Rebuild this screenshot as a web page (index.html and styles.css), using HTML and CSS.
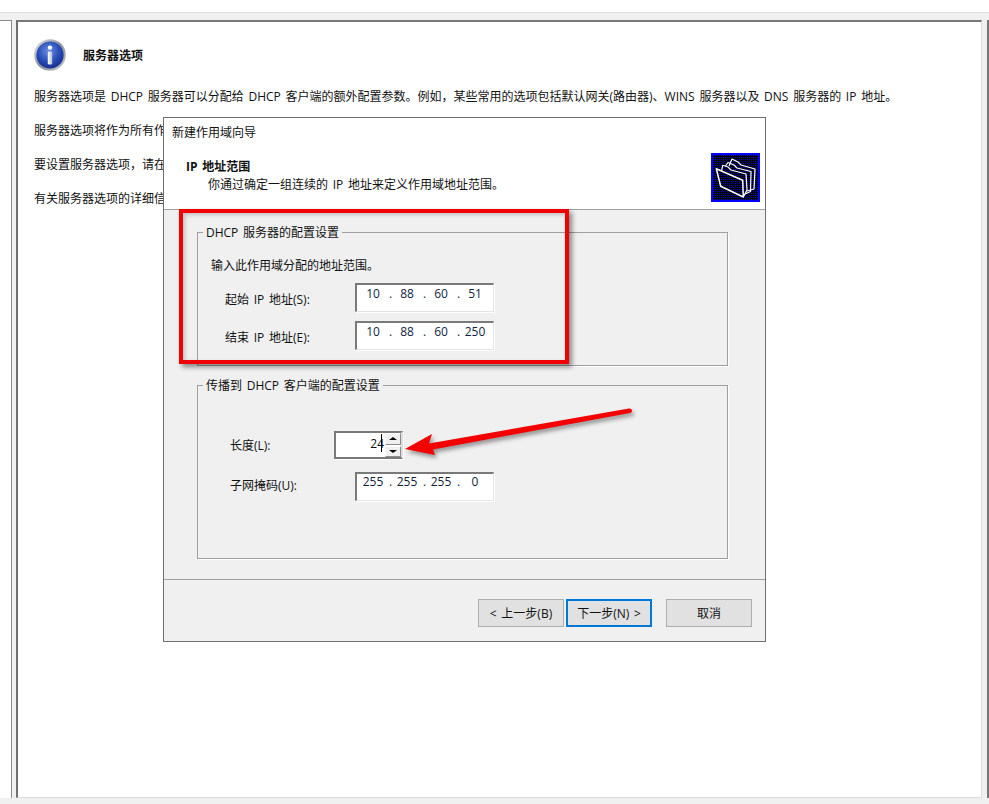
FILE: index.html
```html
<!DOCTYPE html>
<html lang="zh-CN">
<head>
<meta charset="utf-8">
<title>新建作用域向导</title>
<link rel="stylesheet" href="styles.css">
</head>
<body>
<div class="page">
  <div class="top-white"></div>
  <div class="top-band"></div>
  <div class="workspace">
    <div class="pane-left"></div>
    <main class="pane-main">
      <header class="page-head">
        <svg class="info-icon" viewBox="0 0 32 32" aria-hidden="true">
          <defs>
            <radialGradient id="orb" cx="45%" cy="35%" r="70%">
              <stop offset="0" stop-color="#6c8fe6"/>
              <stop offset=".55" stop-color="#2a4fb8"/>
              <stop offset="1" stop-color="#12288a"/>
            </radialGradient>
            <linearGradient id="ring" x1="0" y1="0" x2="1" y2="1">
              <stop offset="0" stop-color="#e4e6ea"/>
              <stop offset=".5" stop-color="#8a8f98"/>
              <stop offset="1" stop-color="#c9ccd2"/>
            </linearGradient>
            <linearGradient id="stem" x1="0" y1="0" x2="1" y2="0">
              <stop offset="0" stop-color="#ffffff"/>
              <stop offset="1" stop-color="#b9bfca"/>
            </linearGradient>
          </defs>
          <circle cx="16" cy="16" r="15.8" fill="url(#ring)"/>
          <circle cx="16" cy="16" r="13.6" fill="url(#orb)"/>
          <circle cx="16" cy="8.6" r="2.2" fill="#fff"/>
          <rect x="13.8" y="12.6" width="4.4" height="13" rx="1.4" fill="url(#stem)"/>
        </svg>
        <h1 class="page-title">服务器选项</h1>
      </header>
      <p class="para para-first">服务器选项是 DHCP 服务器可以分配给 DHCP 客户端的额外配置参数。例如，某些常用的选项包括默认网关(路由器)、WINS 服务器以及 DNS 服务器的 IP 地址。</p>
      <p class="para">服务器选项将作为所有作</p>
      <p class="para">要设置服务器选项，请在</p>
      <p class="para">有关服务器选项的详细信</p>
    </main>
    <div class="pane-right"></div>
  </div>
  <div class="bottom-band"></div>

  <section class="dialog">
    <div class="dialog-top">
      <div class="dialog-title">新建作用域向导</div>
      <div class="wizard-head">
        <div class="wizard-text">
          <div class="wizard-heading">IP 地址范围</div>
          <div class="wizard-sub">你通过确定一组连续的 IP 地址来定义作用域地址范围。</div>
        </div>
        <svg class="folder-icon" viewBox="0 0 49 49" aria-hidden="true">
          <defs>
            <pattern id="dither" width="2" height="2" patternUnits="userSpaceOnUse">
              <rect width="2" height="2" fill="#000"/>
              <rect width="1" height="1" fill="#0000c8"/>
            </pattern>
          </defs>
          <rect width="49" height="49" fill="#0000ff"/>
          <rect x="2" y="2" width="45" height="45" fill="url(#dither)"/>
          <g fill="none" stroke="#fff" stroke-width="1.2" stroke-linejoin="round">
            <path d="M18 13 L21 6 L27 9 L30 12 L44 16 L43 36 L36 38"/>
            <path d="M14.500 13 L17 9.500 L23 12 L26 15 L40 18.500 L39.500 38.500 L34 41"/>
            <path d="M10.700 17.300 L11.700 12.300 L17 14 L20 17 L35 21 L36 37 L32.300 44"/>
            <path d="M5.300 15.700 L31.700 27.300 L32.300 44 L9.700 33.300 Z" stroke-width="1.500"/>
          </g>
        </svg>
      </div>
    </div>
    <div class="dialog-body">
      <fieldset class="group group-range">
        <legend class="group-legend">DHCP 服务器的配置设置</legend>
        <p class="group-hint">输入此作用域分配的地址范围。</p>
        <div class="field-row field-row-start">
          <label class="field-label">起始 IP 地址(S):</label>
          <div class="ip-box">
            <span>10</span><i>.</i><span>88</span><i>.</i><span>60</span><i>.</i><span>51</span>
          </div>
        </div>
        <div class="field-row field-row-end">
          <label class="field-label">结束 IP 地址(E):</label>
          <div class="ip-box">
            <span>10</span><i>.</i><span>88</span><i>.</i><span>60</span><i>.</i><span>250</span>
          </div>
        </div>
      </fieldset>
      <fieldset class="group group-mask">
        <legend class="group-legend">传播到 DHCP 客户端的配置设置</legend>
        <div class="field-row field-row-length">
          <label class="field-label field-label-short">长度(L):</label>
          <div class="spin-box">
            <div class="spin-value"><span class="spin-number">24</span><span class="caret"></span></div>
            <div class="spin-buttons">
              <div class="spin-btn"><span class="tri-up"></span></div>
              <div class="spin-btn"><span class="tri-down"></span></div>
            </div>
          </div>
        </div>
        <div class="field-row field-row-mask">
          <label class="field-label field-label-mask">子网掩码(U):</label>
          <div class="ip-box ip-box-mask">
            <span>255</span><i>.</i><span>255</span><i>.</i><span>255</span><i>.</i><span>0</span>
          </div>
        </div>
      </fieldset>
    </div>
    <footer class="dialog-foot">
      <button class="btn" type="button">&lt; 上一步(B)</button>
      <button class="btn btn-default" type="button">下一步(N) &gt;</button>
      <button class="btn btn-cancel" type="button">取消</button>
    </footer>
  </section>

  <div class="callout-box"></div>
  <svg class="callout-arrow" viewBox="0 0 250 60" aria-hidden="true">
    <path d="M5 41 L32 26 L29 35.500 L229 .5 C232.500 0 233 4.500 230 5 L33 41.500 L35 47 Z" fill="#f40000"/>
  </svg>
</div>
</body>
</html>
```
FILE: styles.css
```css
* { box-sizing: border-box; }
html, body { margin: 0; padding: 0; }
body {
  background: #fff;
  color: #111;
  font: 12px/16px "Open Sans", "Noto Sans CJK SC", "Noto Sans", sans-serif;
  word-spacing: 1.6px;
}
.page {
  position: relative;
  width: 989px;
  height: 804px;
  overflow: hidden;
  display: flex;
  flex-direction: column;
}
.top-white { height: 13px; background: #fff; border-bottom: 1px solid #e2e2e2; }
.top-band { height: 7px; background: #f0f0f0; }
.workspace {
  flex: 1;
  display: flex;
  background: #f0f0f0;
}
.pane-left {
  width: 12px;
  background: #fff;
  border-top: 1px solid #8a8a8a;
  border-right: 1px solid #8a8a8a;
}
.pane-main {
  margin-left: 4px;
  width: 966px;
  background: #fff;
  border-top: 2px solid #777;
  border-left: 2px solid #6e6e6e;
  border-right: 1px solid #dcdcdc;
  border-bottom: 1px solid #dcdcdc;
  padding: 17px 0 0 16px;
}
.pane-right {
  margin-left: 5px;
  flex: 1;
  background: #fff;
  border-top: 2px solid #777;
  border-left: 2px solid #777;
}
.bottom-band { height: 6px; background: #f0f0f0; }

.page-head { display: flex; align-items: center; height: 32px; }
.info-icon { width: 32px; height: 32px; flex: none; }
.page-title { margin: 1px 0 0 17px; font-size: 12px; line-height: 16px; font-weight: 700; color: #111; }
.para { margin: 18px 0 0; height: 16px; white-space: nowrap; }
.para-first { margin-top: 18px; }

.dialog {
  position: absolute;
  left: 163px;
  top: 117px;
  width: 603px;
  height: 525px;
  background: #f0f0f0;
  border: 1px solid #6f6f6f;
  display: flex;
  flex-direction: column;
}
.dialog-top {
  height: 92px;
  background: #fff;
  border-bottom: 1px solid #a0a0a0;
  flex: none;
}
.dialog-title { height: 16px; margin: 7px 0 0 8px; }
.wizard-head {
  display: flex;
  justify-content: space-between;
  margin-top: 11px;
  padding: 0 5px 0 22px;
}
.wizard-text { padding-top: 7px; }
.wizard-heading { font-weight: 700; height: 16px; }
.wizard-sub { margin: 2px 0 0 22px; height: 16px; }
.folder-icon { width: 49px; height: 49px; flex: none; margin-top: 1px; display: block; }

.dialog-body { flex: 1; padding: 0 0 0 33px; }
.group {
  margin: 0;
  padding: 0;
  min-width: 0;
  width: 531px;
  border: 1px solid #a0a0a0;
  box-shadow: 1px 1px 0 #fff;
}
.group-legend { margin-left: 5px; padding: 0 3px; height: 16px; line-height: 18px; }
.group-range { height: 142px; margin-top: 14px; }
.group-mask { height: 182px; margin-top: 11px; }
.group-hint { margin: 18px 0 0 13px; height: 16px; }

.field-row { display: flex; align-items: flex-start; margin-left: 27px; }
.field-row-start { margin-top: 9px; }
.field-row-end { margin-top: 9px; }
.field-row-length { margin-top: 38px; margin-left: 32px; }
.field-row-mask { margin-top: 12px; margin-left: 32px; }
.field-label { width: 130px; flex: none; padding-top: 9px; height: 29px; }
.field-label-short { width: 104px; padding-top: 7px; }
.field-label-mask { width: 125px; padding-top: 6px; }

.ip-box {
  width: 139px;
  height: 29px;
  background: #fff;
  border-top: 2px solid #7a7a7a;
  border-left: 2px solid #7a7a7a;
  border-right: 1px solid #e4e4e4;
  border-bottom: 1px solid #e4e4e4;
  box-shadow: 1px 1px 0 #fff;
  padding: 0;
  display: flex;
  align-items: flex-start;
  line-height: 16px;
  color: #0f1f44;
}
.ip-box span { width: 32px; padding-top: 1px; text-align: center; flex: none; }
.ip-box i { width: 2px; padding-top: 1px; font-style: normal; flex: none; text-align: center; }
.ip-box-mask { color: #111d33; }
.ip-box-mask span, .ip-box-mask i { padding-top: 0; }

.spin-box {
  width: 69px;
  height: 28px;
  display: flex;
  background: #fff;
  border: 2px solid #7a7a7a;
  border-right-color: #dedede;
  border-bottom-color: #7a7a7a;
  box-shadow: 1px 1px 0 #fff;
}
.spin-value {
  flex: 1;
  display: flex;
  justify-content: flex-end;
  padding: 1px 3px 0 0;
  position: relative;
}
.spin-number { padding-top: 2px; }
.caret {
  display: block;
  width: 1px;
  height: 18px;
  background: #000;
  margin-left: -3px;
}
.spin-buttons { width: 16px; flex: none; display: flex; flex-direction: column; gap: 1px; }
.spin-btn {
  flex: 1;
  background: #f0f0f0;
  border: 1px solid #8c8c8c;
  border-top-color: #fff;
  border-left-color: #fff;
  display: flex;
  align-items: center;
  justify-content: center;
}
.tri-up, .tri-down {
  display: block;
  width: 0;
  height: 0;
  border-left: 4px solid transparent;
  border-right: 4px solid transparent;
}
.tri-up { border-bottom: 3px solid #000; }
.tri-down { border-top: 3px solid #000; }

.dialog-foot {
  flex: none;
  height: 62px;
  border-top: 1px solid #a0a0a0;
  display: flex;
  align-items: flex-start;
  padding: 19px 0 0 314px;
  gap: 2px;
}
.btn {
  width: 86px;
  height: 28px;
  padding: 2px 0 0;
  background: #e1e1e1;
  border: 1px solid #adadad;
  color: #111;
  font: inherit;
  word-spacing: inherit;
}
.btn-default { border: 2px solid #0078d7; }
.btn-cancel { margin-left: 12px; }

.callout-box {
  position: absolute;
  left: 179px;
  top: 209px;
  width: 390px;
  height: 155px;
  border: 4px solid #f00000;
  box-shadow: 3px 3px 5px rgba(0, 0, 0, .45), inset 2px 2px 4px rgba(0, 0, 0, .2);
}
.callout-arrow {
  position: absolute;
  left: 400px;
  top: 408px;
  width: 250px;
  height: 60px;
  filter: drop-shadow(2px 3px 2px rgba(0, 0, 0, .4));
}
```
